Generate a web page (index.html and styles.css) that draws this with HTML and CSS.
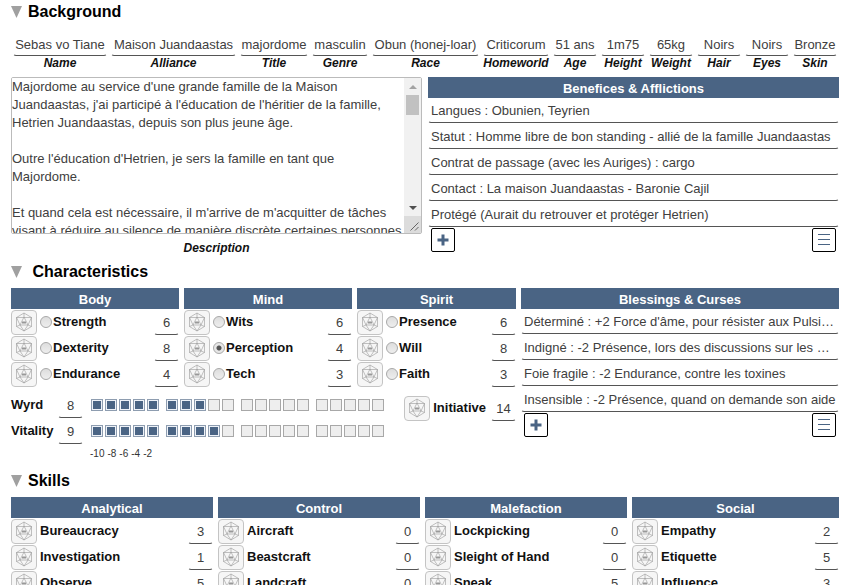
FILE: index.html
```html
<!DOCTYPE html>
<html lang="fr">
<head>
<meta charset="utf-8">
<title>Background</title>
<link rel="stylesheet" href="styles.css">
</head>
<body>
<svg class="defs" aria-hidden="true">
  <symbol id="d20" viewBox="0 0 18 20">
    <path d="M9 1 16.5 5.500V14.500L9 19 1.500 14.500V5.500Z M1.500 5.500H16.500 M9 5 5 13H13Z M9 1V5 M1.500 5.500 5 13 9 19 13 13 16.500 5.500 M5 13 1.500 14.500 M13 13 16.500 14.500"/>
    <path class="face" d="M7 10.500H11"/>
  </symbol>
  <symbol id="arrow" viewBox="0 0 11 12"><path d="M0 0H11L5.500 12Z"/></symbol>
  <symbol id="plus" viewBox="0 0 12 12"><path d="M4.500 0.500H7.500V4.500H11.500V7.500H7.500V11.500H4.500V7.500H0.500V4.500H4.500Z"/></symbol>
  <symbol id="list" viewBox="0 0 12 12"><path d="M0 0.500H12M0 5.500H12M0 10.500H12"/></symbol>
  <symbol id="up" viewBox="0 0 8 4"><path d="M0 4H8L4 0Z"/></symbol>
  <symbol id="down" viewBox="0 0 8 4"><path d="M0 0H8L4 4Z"/></symbol>
  <symbol id="grip" viewBox="0 0 9 9"><path d="M0.500 8.500 8.500 0.500M5 8.500 8.500 5"/></symbol>
</svg>
<main class="sheet" id="sheet"></main>
<script src="sheet.js"></script>
</body>
</html>
```
FILE: sheet.js
```js
const fields = [
  ["Name", "Sebas vo Tiane"], ["Alliance", "Maison Juandaastas"], ["Title", "majordome"],
  ["Genre", "masculin"], ["Race", "Obun (honej-loar)"], ["Homeworld", "Criticorum"],
  ["Age", "51 ans"], ["Height", "1m75"], ["Weight", "65kg"],
  ["Hair", "Noirs"], ["Eyes", "Noirs"], ["Skin", "Bronze"]
];
const description = `Majordome au service d'une grande famille de la Maison Juandaastas, j'ai participé à l'éducation de l'héritier de la famille, Hetrien Juandaastas, depuis son plus jeune âge.

Outre l'éducation d'Hetrien, je sers la famille en tant que Majordome.

Et quand cela est nécessaire, il m'arrive de m'acquitter de tâches visant à réduire au silence de manière discrète certaines personnes`;
const benefices = [
  "Langues : Obunien, Teyrien",
  "Statut : Homme libre de bon standing - allié de la famille Juandaastas",
  "Contrat de passage (avec les Auriges) : cargo",
  "Contact : La maison Juandaastas - Baronie Cajil",
  "Protégé (Aurait du retrouver et protéger Hetrien)"
];
const blessings = [
  "Déterminé : +2 Force d'âme, pour résister aux Pulsions",
  "Indigné : -2 Présence, lors des discussions sur les Maisons",
  "Foie fragile : -2 Endurance, contre les toxines",
  "Insensible : -2 Présence, quand on demande son aide"
];
const stats = {
  Body: [["Strength", 6], ["Dexterity", 8], ["Endurance", 4]],
  Mind: [["Wits", 6], ["Perception", 4], ["Tech", 3]],
  Spirit: [["Presence", 6], ["Will", 8], ["Faith", 3]]
};
const skills = {
  Analytical: [["Bureaucracy", 3], ["Investigation", 1], ["Observe", 5]],
  Control: [["Aircraft", 0], ["Beastcraft", 0], ["Landcraft", 0]],
  Malefaction: [["Lockpicking", 0], ["Sleight of Hand", 0], ["Sneak", 5]],
  Social: [["Empathy", 2], ["Etiquette", 5], ["Influence", 3]]
};

const slug = s => s.toLowerCase().replace(/[^a-z]+/g, "-");
const use = (id, cls) => `<svg class="${cls}" aria-hidden="true"><use href="#${id}"/></svg>`;
const heading = t => `<h2><button type="button" class="toggle">${use("arrow", "arrow")}${t}</button></h2>`;
const roll = name => `<button type="button" class="roll" aria-label="${name}">${use("d20", "d20")}</button>`;
const score = (id, v) => `<input class="line score" id="${id}" value="${v}">`;

const repeating = (title, items) => `
  <div class="list">
    <h3>${title}</h3>
    ${items.map(t => `<input class="line entry" aria-label="${title.replace("&", "&amp;")}" value="${t}">`).join("")}
    <div class="list-tools">
      <button type="button" class="tool" aria-label="+">${use("plus", "plus")}</button>
      <button type="button" class="tool" aria-label="☰">${use("list", "bars")}</button>
    </div>
  </div>`;

const column = (title, rows, radio) => `
  <div>
    <h3>${title}</h3>
    ${rows.map(([n, v]) => `
    <div class="row">
      ${roll(n)}
      ${radio ? `<input type="radio" name="stat" aria-label="${n}"${n === "Perception" ? " checked" : ""}>` : ""}
      <label class="${radio ? "stat-name" : "skill-name"}" for="${slug(n)}">${n}</label>
      ${score(slug(n), v)}
    </div>`).join("")}
  </div>`;

const track = (name, v) => `
  <div class="track">
    <label for="${slug(name)}">${name}</label>
    ${score(slug(name), v)}
    <div class="boxes">
      ${[0, 1, 2, 3].map(g => `<div class="group">${[1, 2, 3, 4, 5].map(i =>
        `<input type="checkbox" aria-label="${name} ${g * 5 + i}"${g * 5 + i <= v ? " checked" : ""}>`).join("")}</div>`).join("")}
    </div>
  </div>`;

const columns = (groups, radio) => Object.entries(groups).map(([t, r]) => column(t, r, radio)).join("");

document.getElementById("sheet").innerHTML = `
<section class="background">
  ${heading("Background")}
  <div class="identity">
    ${fields.map(([n, v]) => `<div class="field"><input class="line" id="${slug(n)}" value="${v}"><label class="caption" for="${slug(n)}">${n}</label></div>`).join("")}
  </div>
  <div class="halves">
    <div class="about">
      <div class="scroller">
        <textarea id="description">${description}</textarea>
        <div class="scrollbar" aria-hidden="true">
          <div class="end">${use("up", "up")}</div>
          <div class="thumb"></div>
          <div class="end last">${use("down", "down")}</div>
          <div class="corner">${use("grip", "grip")}</div>
        </div>
      </div>
      <label class="caption" for="description">Description</label>
    </div>
    ${repeating("Benefices & Afflictions", benefices)}
  </div>
</section>
<section>
  ${heading("&nbsp;Characteristics")}
  <div class="traits">
    <div>
      <div class="stats">${columns(stats, true)}</div>
      <div class="vitals">
        <div>
          ${track("Wyrd", 8)}
          ${track("Vitality", 9)}
          <div class="penalties"><span>-10</span><span>-8</span><span>-6</span><span>-4</span><span>-2</span></div>
        </div>
        <div class="initiative">${roll("Initiative")}<label for="initiative">Initiative</label>${score("initiative", 14)}</div>
      </div>
    </div>
    ${repeating("Blessings & Curses", blessings)}
  </div>
</section>
<section>
  ${heading("Skills")}
  <div class="skills">${columns(skills, false)}</div>
</section>`;
```
FILE: styles.css
```css
* { box-sizing: border-box; }
html { overflow: hidden; }
body {
  margin: 0;
  padding: 0 20px 0 11px;
  background: #fff;
  color: #111;
  font: 13px/18px "Liberation Sans", Arial, sans-serif;
}
button, input, textarea { font: inherit; margin: 0; }
.defs { position: absolute; width: 0; height: 0; }

h2, h3 { margin: 0; }
h2 { height: 28px; }
.background h2 { height: 34px; }
.toggle {
  display: flex;
  align-items: center;
  gap: 6px;
  height: 24px;
  padding: 0;
  border: 0;
  background: none;
  color: #000;
  font-size: 16px;
  font-weight: bold;
}
.arrow { width: 11px; height: 12px; fill: #a0a0a0; }
h3 {
  height: 21px;
  background: #4a6484;
  color: #fff;
  font-size: 13px;
  line-height: 24px;
  text-align: center;
}

.line {
  display: block;
  width: 100%;
  min-width: 0;
  height: 25px;
  padding: 0 2px;
  border: 1px solid transparent;
  border-bottom-color: #555;
  border-radius: 3px;
  background: transparent;
  color: #404040;
  text-overflow: ellipsis;
}
.caption {
  display: block;
  color: #111;
  font-size: 12px;
  line-height: 14px;
  font-style: italic;
  font-weight: bold;
  text-align: center;
}

.identity {
  display: grid;
  grid-template-columns: 98fr 129fr 72fr 60fr 111fr 70fr repeat(6, 48fr);
  height: 43px;
}
.field { padding: 0 2px; min-width: 0; }
.field .line { height: 22px; padding: 0 0 2px; text-align: center; }

.halves { display: grid; grid-template-columns: 1fr 1fr; gap: 6px; height: 183px; }
.scroller { position: relative; }
textarea {
  display: block;
  width: 100%;
  height: 157px;
  padding: 0 17px 0 0;
  border: 1px solid #bbb;
  border-radius: 2px;
  color: #404040;
  scrollbar-width: none;
  resize: none;
}
.scrollbar {
  position: absolute;
  top: 1px;
  right: 1px;
  bottom: 1px;
  display: flex;
  flex-direction: column;
  width: 17px;
  background: #f1f1f1;
}
.end { display: grid; place-items: center; height: 17px; }
.last { margin-top: auto; }
.up, .down { width: 8px; height: 4px; fill: #a3a3a3; }
.down { fill: #505050; }
.thumb { height: 20px; margin: 0 2px; background: #c1c1c1; }
.corner { display: grid; place-items: end; height: 17px; padding: 2px; background: #dcdcdc; }
.grip { width: 9px; height: 9px; stroke: #666; }
.about .caption { margin-top: 7px; }

.list { min-width: 0; }
.list .entry { margin-bottom: 1px; }
.list-tools { display: flex; justify-content: space-between; padding: 0 3px; }
.tool {
  display: grid;
  place-items: center;
  width: 24px;
  height: 24px;
  padding: 0;
  border: 1px solid #000;
  border-radius: 2px;
  background: #fff;
}
.plus { width: 12px; height: 12px; fill: #4a6484; }
.bars { width: 12px; height: 12px; stroke: #4a6484; }

.traits { display: grid; grid-template-columns: 505fr 318fr; gap: 5px; height: 181px; }
.stats { display: grid; grid-template-columns: 168fr 168fr 159fr; gap: 5px; }
.skills { display: grid; grid-template-columns: 202fr 202fr 202fr 207fr; gap: 5px; }
label { font-weight: bold; }
.row { display: flex; align-items: center; height: 26px; }
.row label { flex: 1; }
.stat-name { padding-left: 1px; }
.skill-name { padding-left: 3px; }
.roll {
  display: grid;
  place-items: center;
  flex: none;
  width: 26px;
  height: 25px;
  padding: 0;
  border: 1px solid #c4c4c4;
  border-radius: 4px;
  background: #f6f6f6;
}
.d20 { width: 18px; height: 20px; fill: none; stroke: #999; stroke-width: 0.6; }
.face { stroke: #999; stroke-width: 2; }
.score { flex: none; width: 25px; padding: 0; text-align: center; }

input[type="radio"], input[type="checkbox"] {
  appearance: none;
  flex: none;
  width: 12px;
  height: 12px;
  border: 1px solid #a8a8a8;
  background: #eee;
}
input[type="radio"] { margin-left: 3px; border-radius: 50%; background: linear-gradient(#ddd, #eee); }
input[type="radio"]:checked { background: radial-gradient(circle, #555 0 2px, #e6e6e6 3px); }
input[type="checkbox"]:checked { border-color: #8e9db0; background: #4a6484; box-shadow: inset 0 0 0 1px #eef2f8; }

.vitals { display: flex; justify-content: space-between; padding-top: 5px; }
.track { display: flex; align-items: center; height: 26px; }
.track label { width: 47px; }
.boxes { display: flex; gap: 7px; margin-left: 8px; }
.group { display: flex; gap: 2px; }
.penalties { display: flex; gap: 3px; padding: 1px 0 0 79px; font-size: 10px; color: #333; }
.initiative { display: flex; align-items: center; height: 26px; margin-top: 3px; }
.initiative label { padding: 0 5px 0 3px; }
```
